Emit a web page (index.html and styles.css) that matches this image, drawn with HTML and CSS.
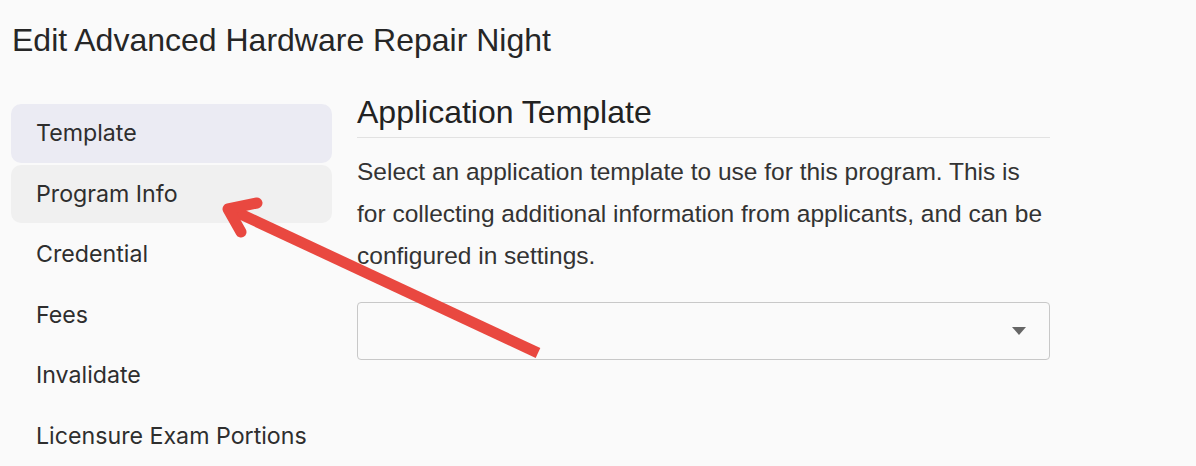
FILE: index.html
```html
<!DOCTYPE html>
<html>
<head>
<meta charset="utf-8">
<link rel="stylesheet" href="styles.css">
</head>
<body>
<div class="page">
  <h1 class="title">Edit Advanced Hardware Repair Night</h1>
  <div class="layout">
    <nav class="nav">
      <div class="nav-item active">Template</div>
      <div class="nav-item hover">Program Info</div>
      <div class="nav-item">Credential</div>
      <div class="nav-item">Fees</div>
      <div class="nav-item">Invalidate</div>
      <div class="nav-item">Licensure Exam Portions</div>
    </nav>
    <section class="content">
      <h2 class="section-title">Application Template</h2>
      <p class="desc">Select an application template to use for this program. This is for collecting additional information from applicants, and can be configured in settings.</p>
      <div class="select">
        <span class="caret"></span>
      </div>
    </section>
  </div>
  <svg class="annotation" width="1196" height="466" viewBox="0 0 1196 466">
    <g stroke="#e94840" stroke-width="11" fill="none">
      <line x1="538" y1="353" x2="234" y2="211"/>
      <polyline points="257,203 228,209 241,232" stroke-linecap="round" stroke-linejoin="round"/>
    </g>
  </svg>
</div>
</body>
</html>
```
FILE: styles.css
```css
html, body {
  margin: 0;
  padding: 0;
  background: #fafafa;
}
.page {
  position: relative;
  width: 1196px;
  height: 466px;
  overflow: hidden;
  font-family: "Liberation Sans", Arial, sans-serif;
  color: #222;
}
.title {
  margin: 0;
  padding: 21px 0 0 12px;
  font-weight: 400;
  font-size: 32px;
  line-height: 38px;
  color: #262626;
  letter-spacing: 0;
}
.layout {
  display: flex;
  margin-top: 34px;
  padding-left: 11px;
  gap: 25px;
}
.nav {
  width: 321px;
  display: flex;
  flex-direction: column;
  gap: 2px;
  padding-top: 11px;
}
.nav-item {
  height: 58.5px;
  flex: none;
  display: flex;
  align-items: center;
  padding-left: 25px;
  border-radius: 10px;
  font-family: Inter, "Noto Sans", sans-serif;
  font-size: 23.2px;
  color: #2e2e2e;
}
.nav-item.active {
  background: #ebebf3;
}
.nav-item.hover {
  background: #f0f0f0;
}
.content {
  width: 693px;
}
.section-title {
  margin: 0;
  font-weight: 400;
  font-size: 32px;
  line-height: 38px;
  color: #222;
  padding-bottom: 6px;
  border-bottom: 1px solid #e2e2e2;
}
.desc {
  margin: 13px 0 0 0;
  font-size: 24.5px;
  line-height: 42px;
  color: #333;
}
.select {
  margin-top: 25px;
  height: 56px;
  border: 1px solid #c8c8c8;
  border-radius: 4px;
  display: flex;
  align-items: center;
  justify-content: flex-end;
  padding-right: 23px;
}
.caret {
  width: 0;
  height: 0;
  border-left: 7px solid transparent;
  border-right: 7px solid transparent;
  border-top: 8px solid #666;
}
.annotation {
  position: absolute;
  left: 0;
  top: 0;
  pointer-events: none;
}
```
